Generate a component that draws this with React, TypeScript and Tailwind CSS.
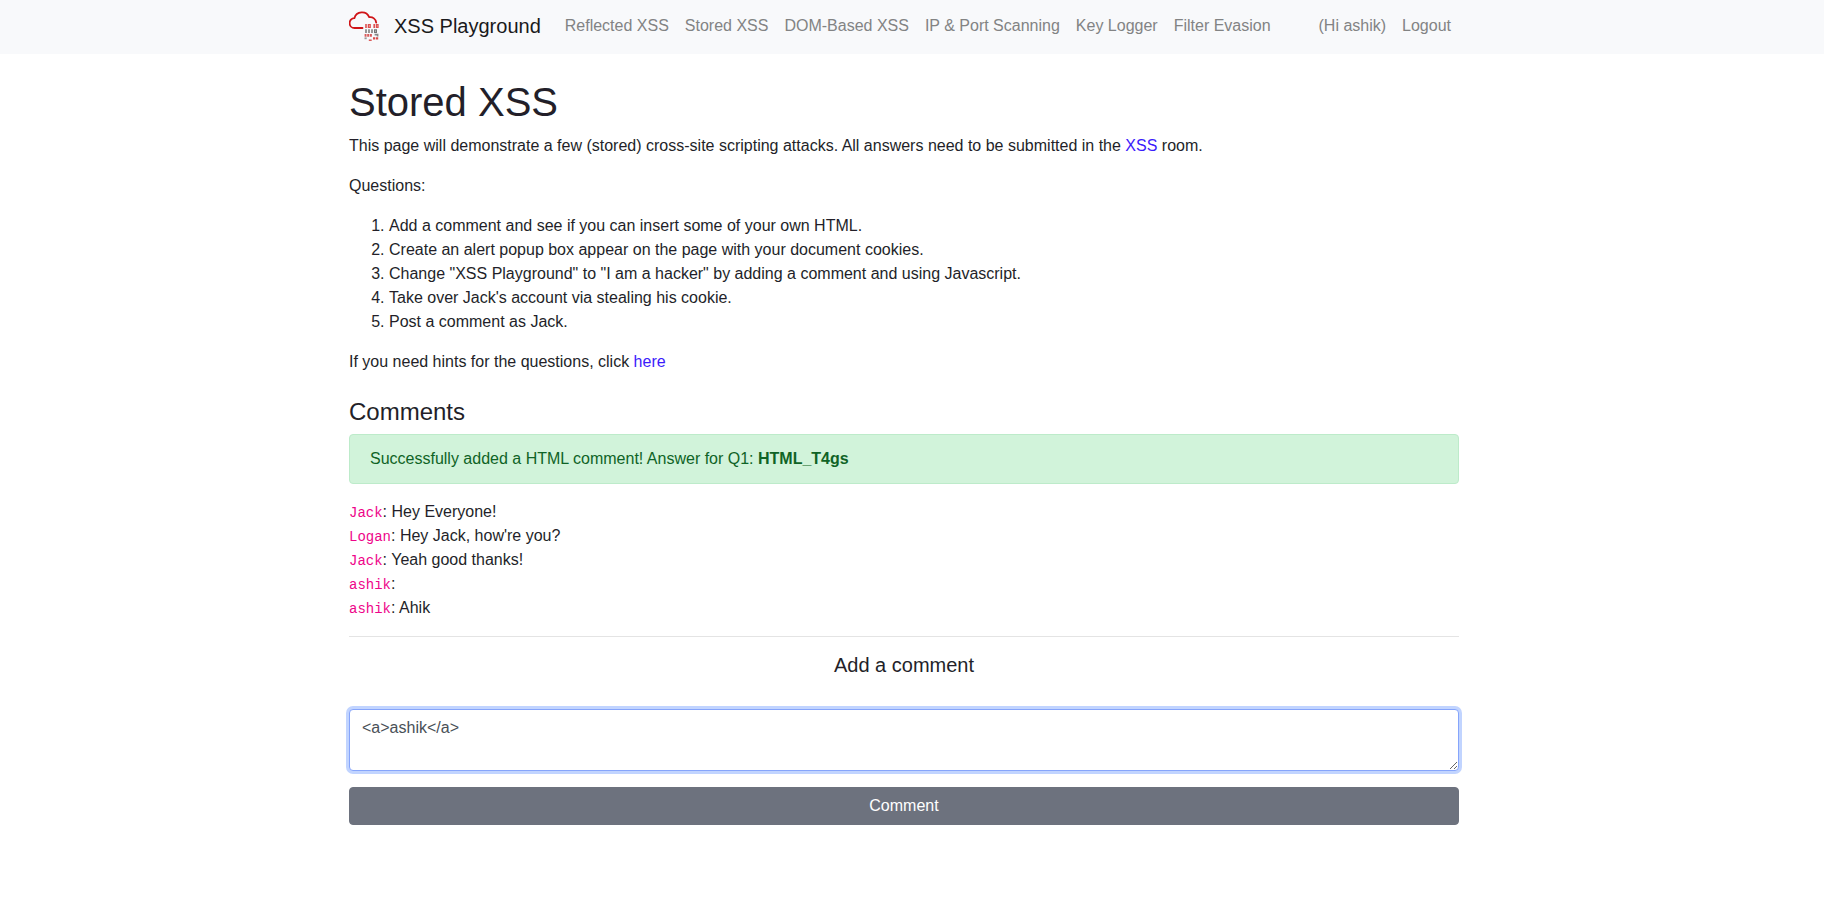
import { useState } from "react";

const links = [
  "Reflected XSS",
  "Stored XSS",
  "DOM-Based XSS",
  "IP & Port Scanning",
  "Key Logger",
  "Filter Evasion",
];

const questions = [
  "Add a comment and see if you can insert some of your own HTML.",
  "Create an alert popup box appear on the page with your document cookies.",
  'Change "XSS Playground" to "I am a hacker" by adding a comment and using Javascript.',
  "Take over Jack's account via stealing his cookie.",
  "Post a comment as Jack.",
];

const comments = [
  { author: "Jack", text: "Hey Everyone!" },
  { author: "Logan", text: "Hey Jack, how're you?" },
  { author: "Jack", text: "Yeah good thanks!" },
  { author: "ashik", text: "" },
  { author: "ashik", text: "Ahik" },
];

function Logo() {
  return (
    <svg viewBox="0 0 30 30" className="size-[30px]" aria-hidden="true">
      <path
        d="M13.5 17H5.6A4.8 4.8 0 0 1 5.4 7.2A7.8 7.8 0 0 1 20.2 6.2A6 6 0 0 1 27.2 11.6"
        fill="none"
        stroke="#cf1417"
        strokeWidth="1.8"
        strokeLinecap="round"
        strokeLinejoin="round"
      />
      <g fill="none">
        <path d="M17 13v4M25.2 13v4" stroke="#dd5150" strokeWidth="1.6" />
        <path d="M19.4 13.6h1.8v2.8h-1.8zM27.4 13.6h1.6v2.8h-1.6z" stroke="#dd5150" strokeWidth="1.3" />
        <path d="M17 18.2v3.8M20 18.2v3.8M23 18.2v3.8" stroke="#777" strokeWidth="1.5" />
        <path d="M25.6 18.8h1.8v2.6h-1.8z" stroke="#777" strokeWidth="1.2" />
        <path d="M15.6 24.4h1.9M18.2 24.4h1.8M20.7 24.4h2.2" stroke="#d65b5b" strokeWidth="2.8" />
        <path d="M25.6 23.6h3.8M27.8 24.8h1.6" stroke="#888" strokeWidth="1.6" />
        <path d="M15.5 27.3h2.2" stroke="#999" strokeWidth="1.8" />
        <path d="M19.8 29.2h2.9" stroke="#d84a49" strokeWidth="1.4" />
        <path d="M24 27.3h2.2M26.9 27.3h2.3" stroke="#d84a49" strokeWidth="2.2" />
      </g>
    </svg>
  );
}

const navLink = "px-2 py-2 text-[#828384] hover:text-[#4d4d4e]";

export default function App() {
  const [draft, setDraft] = useState("<a>ashik</a>");

  return (
    <div className="min-h-screen bg-white font-['Liberation_Sans',Arial,sans-serif] text-base leading-6 text-[#231f29]">
      <nav className="bg-[#f8f9fb] pt-1.5 pr-4 pb-2">
        <div className="mx-auto flex max-w-[1140px] flex-wrap items-center px-[15px]">
          <a href="#" className="mr-4 flex items-center gap-[15px] text-xl leading-[30px] text-[#1a1a1b]">
            <Logo />
            XSS Playground
          </a>
          <div className="flex flex-1 flex-wrap items-center">
            {links.map((label) => (
              <a key={label} href="#" className={navLink}>
                {label}
              </a>
            ))}
            <div className="ml-auto flex">
              <a href="#" className={navLink}>(Hi ashik)</a>
              <a href="#" className={navLink}>Logout</a>
            </div>
          </div>
        </div>
      </nav>

      <div className="pt-6 pr-4">
        <main className="mx-auto max-w-[1140px] px-[15px]">
          <h1 className="mb-2 text-[40px] leading-[48px]">Stored XSS</h1>
          <p className="mb-4">
            This page will demonstrate a few (stored) cross-site scripting attacks. All answers need to be
            submitted in the <a href="#" className="text-[#3b1bfb] hover:underline">XSS</a> room.
          </p>
          <p className="mb-4">Questions:</p>
          <ol className="mb-4 list-decimal pl-10">
            {questions.map((question) => (
              <li key={question}>{question}</li>
            ))}
          </ol>
          <p className="mb-6">
            If you need hints for the questions, click{" "}
            <a href="#" className="text-[#3b1bfb] hover:underline">here</a>
          </p>

          <h4 className="mb-2 text-2xl leading-7">Comments</h4>
          <div role="alert" className="mb-4 rounded border border-[#bdebca] bg-[#d1f3da] px-5 py-3 text-[#0f6326]">
            Successfully added a HTML comment! Answer for Q1: <b>HTML_T4gs</b>
          </div>
          <div>
            {comments.map((comment, index) => (
              <div key={index} className="h-6">
                <code className="font-['Liberation_Mono',monospace] text-sm leading-none text-[#ee0489]">
                  {comment.author}
                </code>
                : {comment.text}
              </div>
            ))}
          </div>

          <hr className="my-4 border-[#e4e4e4]" />

          <form onSubmit={(event) => event.preventDefault()}>
            <label htmlFor="comment" className="mb-8 block text-center text-xl leading-6">
              Add a comment
            </label>
            <textarea
              id="comment"
              rows={2}
              value={draft}
              onChange={(event) => setDraft(event.target.value)}
              className="mb-4 block w-full resize rounded border border-[#86a5fb] bg-white px-3 py-1.5 text-[#495057] ring-3 ring-[#c1d4ff] outline-none"
            />
            <button
              type="submit"
              className="block w-full rounded border border-[#6d727e] bg-[#6d727e] px-3 py-1.5 text-white"
            >
              Comment
            </button>
          </form>
        </main>
      </div>
    </div>
  );
}
